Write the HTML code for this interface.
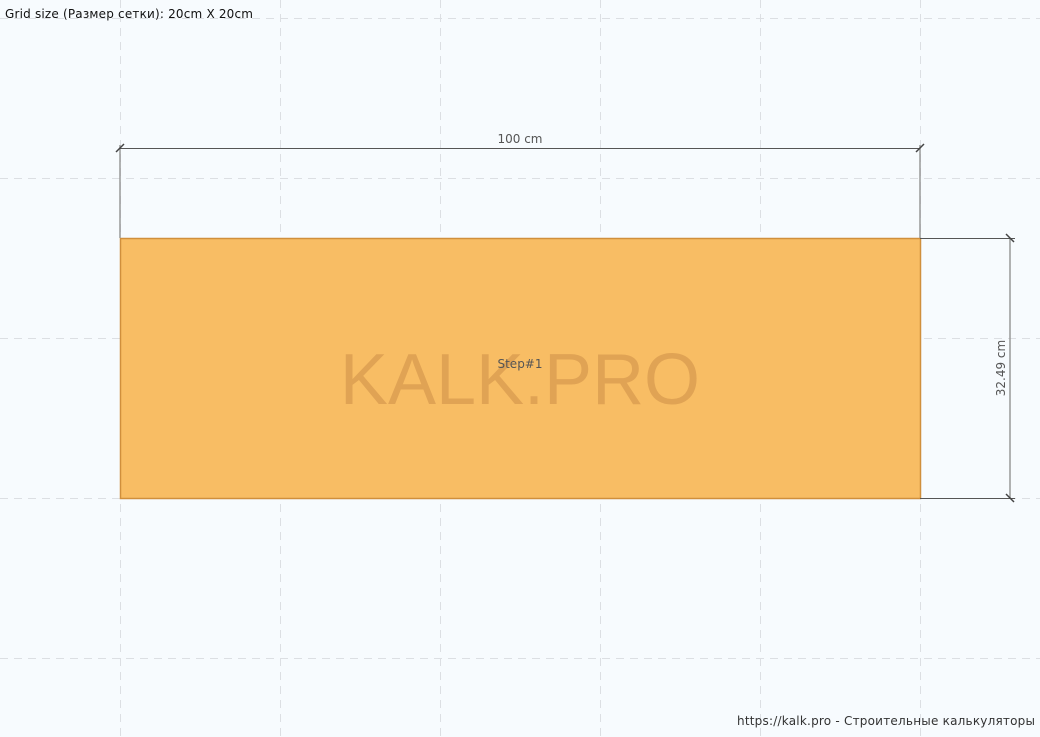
<!DOCTYPE html>
<html><head><meta charset="utf-8"><style>
html,body{margin:0;padding:0;background:#f7fbfe;}
svg{display:block;}
text{font-family:"DejaVu Sans","Liberation Sans",sans-serif;}
</style></head><body>
<svg width="1040" height="737" xmlns="http://www.w3.org/2000/svg">
<rect width="1040" height="737" fill="#f7fbfe"/>
<g stroke="#dcdfe3" stroke-width="1" stroke-dasharray="8,6">
<line x1="120.5" y1="0" x2="120.5" y2="737"/>
<line x1="280.5" y1="0" x2="280.5" y2="737"/>
<line x1="440.5" y1="0" x2="440.5" y2="737"/>
<line x1="600.5" y1="0" x2="600.5" y2="737"/>
<line x1="760.5" y1="0" x2="760.5" y2="737"/>
<line x1="920.5" y1="0" x2="920.5" y2="737"/>
<line x1="0" y1="18.5" x2="1040" y2="18.5"/>
<line x1="0" y1="178.5" x2="1040" y2="178.5"/>
<line x1="0" y1="338.5" x2="1040" y2="338.5"/>
<line x1="0" y1="498.5" x2="1040" y2="498.5"/>
<line x1="0" y1="658.5" x2="1040" y2="658.5"/>
</g>
<rect x="120.5" y="238.5" width="800" height="260" fill="#f8bd64" stroke="#d08f3c" stroke-width="1.5"/>
<text x="520" y="404" font-size="72" fill="#e0a354" text-anchor="middle" style="font-family:'Liberation Sans',sans-serif">KALK.PRO</text>
<text x="520" y="368" font-size="12" fill="#555" text-anchor="middle">Step#1</text>
<g stroke="#999" stroke-width="1.5">
<line x1="120" y1="145" x2="120" y2="238"/>
<line x1="920" y1="145" x2="920" y2="238"/>
<line x1="1010" y1="238" x2="1010" y2="498"/>
</g>
<g stroke="#555" stroke-width="1">
<line x1="120" y1="148.5" x2="920" y2="148.5"/>
<line x1="920" y1="238.5" x2="1015" y2="238.5"/>
<line x1="920" y1="498.5" x2="1015" y2="498.5"/>
</g>
<g stroke="#444" stroke-width="1.5">
<line x1="116" y1="152" x2="124" y2="144"/>
<line x1="916" y1="152" x2="924" y2="144"/>
<line x1="1006" y1="234" x2="1014" y2="242"/>
<line x1="1006" y1="494" x2="1014" y2="502"/>
</g>
<text x="520" y="143" font-size="12" fill="#555" text-anchor="middle">100 cm</text>
<text transform="translate(1005,368) rotate(-90)" font-size="12" fill="#555" text-anchor="middle">32.49 cm</text>
<text x="5" y="18" font-size="12" fill="#111" textLength="248" lengthAdjust="spacing">Grid size (Размер сетки): 20cm X 20cm</text>
<text x="737" y="725" font-size="12" fill="#333" textLength="298" lengthAdjust="spacing">https://kalk.pro - Строительные калькуляторы</text>
</svg>
</body></html>
